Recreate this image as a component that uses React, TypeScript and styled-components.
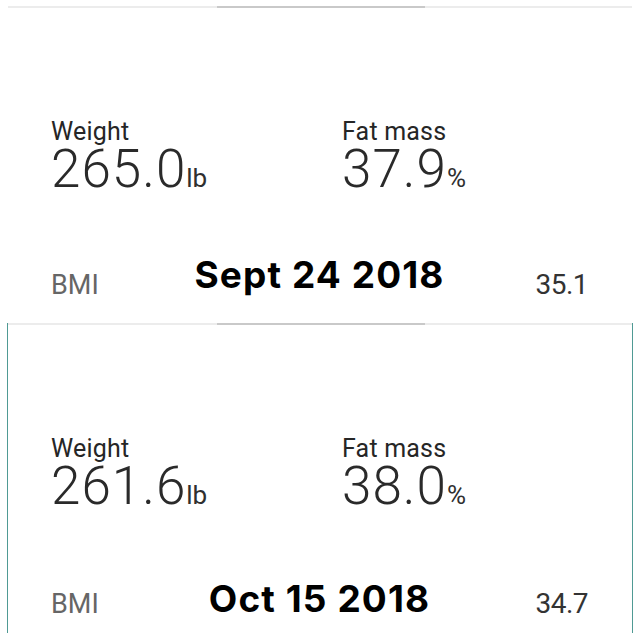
import React from "react";
import styled, { createGlobalStyle } from "styled-components";

const GlobalStyle = createGlobalStyle`
  html, body {
    margin: 0;
    padding: 0;
    background: #ffffff;
  }
  body {
    font-family: Roboto, "Liberation Sans", sans-serif;
    color: #333333;
  }
`;

const Page = styled.div`
  width: 640px;
  height: 640px;
  overflow: hidden;
  display: flex;
  flex-direction: column;
`;

const Panel = styled.section<{ $framed?: boolean; $offset: number; $height: number }>`
  margin: ${(p) => p.$offset}px 7px 0 7px;
  height: ${(p) => p.$height}px;
  flex-shrink: 0;
  border-left: 1px solid ${(p) => (p.$framed ? "#4f9a94" : "transparent")};
  border-right: 1px solid ${(p) => (p.$framed ? "#4f9a94" : "transparent")};
  display: flex;
  flex-direction: column;
`;

const TopRule = styled.div`
  height: 2px;
  background: linear-gradient(
    to right,
    #ececec 0,
    #ececec 209px,
    #c9c9c9 209px,
    #c9c9c9 417px,
    #ececec 417px
  );
`;

const Metrics = styled.div`
  display: grid;
  grid-template-columns: 291px 1fr;
  padding: 111px 0 0 43px;
`;

const Metric = styled.div`
  display: flex;
  flex-direction: column;
`;

const Label = styled.div`
  font-family: Roboto, "Liberation Sans", sans-serif;
  font-size: 25px;
  line-height: 26px;
  color: #262626;
  letter-spacing: 0.2px;
`;

const Value = styled.div`
  display: flex;
  align-items: baseline;
  margin-top: 1px;
`;

const Number = styled.span`
  font-family: Roboto, "Liberation Sans", sans-serif;
  font-weight: 300;
  font-size: 53px;
  line-height: 46px;
  letter-spacing: 1px;
  color: #2a2a2a;
`;

const Unit = styled.span`
  font-family: Roboto, "Liberation Sans", sans-serif;
  font-size: 26px;
  color: #2f2f2f;
  margin-left: 0;
`;

const Footer = styled.div`
  margin-top: auto;
  display: grid;
  grid-template-columns: 1fr auto 1fr;
  align-items: end;
  padding: 0 44px 14px 43px;
`;

const Bmi = styled.span`
  font-family: "Liberation Sans Narrow", Roboto, sans-serif;
  font-size: 27px;
  line-height: 30px;
  color: #666666;
`;

const DateTag = styled.span<{ $lift: number }>`
  font-family: Inter, Roboto, sans-serif;
  font-weight: 700;
  font-size: 37px;
  line-height: 40px;
  letter-spacing: 1.1px;
  color: #000000;
  margin-bottom: ${(p) => p.$lift}px;
  text-align: center;
`;

const BmiValue = styled.span`
  font-family: "Liberation Sans Narrow", Roboto, sans-serif;
  font-size: 28px;
  line-height: 30px;
  letter-spacing: -0.5px;
  color: #333333;
  justify-self: end;
`;

interface Reading {
  date: string;
  weight: string;
  fat: string;
  bmi: string;
  lift: number;
}

const readings: Reading[] = [
  { date: "Sept 24 2018", weight: "265.0", fat: "37.9", bmi: "35.1", lift: 5 },
  { date: "Oct 15 2018", weight: "261.6", fat: "38.0", bmi: "34.7", lift: 0 },
];

const App: React.FC = () => {
  return (
    <Page>
      <GlobalStyle />
      {readings.map((r, i) => (
        <Panel
          key={r.date}
          $framed={i === 1}
          $offset={i === 0 ? 6 : 9}
          $height={i === 0 ? 308 : 310}
        >
          <TopRule />
          <Metrics>
            <Metric>
              <Label>Weight</Label>
              <Value>
                <Number>{r.weight}</Number>
                <Unit>lb</Unit>
              </Value>
            </Metric>
            <Metric>
              <Label>Fat mass</Label>
              <Value>
                <Number>{r.fat}</Number>
                <Unit>%</Unit>
              </Value>
            </Metric>
          </Metrics>
          <Footer>
            <Bmi>BMI</Bmi>
            <DateTag $lift={r.lift}>{r.date}</DateTag>
            <BmiValue>{r.bmi}</BmiValue>
          </Footer>
        </Panel>
      ))}
    </Page>
  );
};

export default App;
